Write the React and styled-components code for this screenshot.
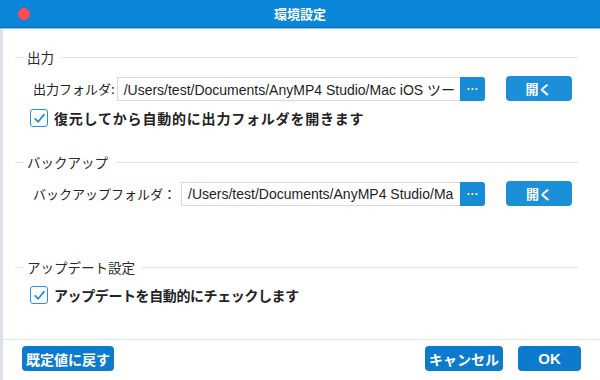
import React from "react";
import styled, { createGlobalStyle } from "styled-components";

const GlobalStyle = createGlobalStyle`
  *, *::before, *::after {
    box-sizing: border-box;
  }
  html, body {
    margin: 0;
    padding: 0;
    background: #ffffff;
  }
  body {
    font-family: "Liberation Sans", "Noto Sans CJK JP", sans-serif;
  }
`;

const jp = `"Noto Sans CJK JP", "Liberation Sans", sans-serif`;

// ウィンドウ全体
const Window = styled.div`
  width: 600px;
  height: 380px;
  display: flex;
  flex-direction: column;
  background: #ffffff;
  overflow: hidden;
`;

const TitleBar = styled.div`
  position: relative;
  height: 28px;
  flex-shrink: 0;
  display: flex;
  align-items: center;
  justify-content: center;
  background: #0a86d8;
  border-bottom: 1px solid #0a6fb6;
  box-shadow: 0 1px 0 #86c8f2;
`;

const CloseDot = styled.span`
  position: absolute;
  left: 18px;
  top: 8px;
  width: 12px;
  height: 12px;
  border-radius: 50%;
  background: #fc4d55;
`;

const Title = styled.div`
  font-family: ${jp};
  font-size: 13px;
  font-weight: 700;
  color: #ffffff;
`;

const Body = styled.div`
  flex: 1;
  display: flex;
  flex-direction: column;
  border-left: 3px solid #dde2e8;
  margin-top: 1px;
  padding: 19px 22px 0 12px;
`;

const Section = styled.div`
  display: flex;
  flex-direction: column;
  margin-top: ${(p) => p.$top || 0}px;
`;

// 見出し + 横線
const SectionHead = styled.div`
  display: flex;
  align-items: center;
  height: 18px;
  font-family: ${jp};
  font-size: 13.5px;
  color: #2a2a2a;

  &::before {
    content: "";
    width: 8px;
    height: 1px;
    background: #e3e3e3;
    margin-right: 4px;
  }
  &::after {
    content: "";
    flex: 1;
    height: 1px;
    background: #e3e3e3;
    margin-left: 7px;
  }
`;

const FieldRow = styled.div`
  display: flex;
  align-items: center;
  height: 25px;
  margin-top: 10px;
  padding-left: 18px;
`;

const Label = styled.span`
  font-family: ${jp};
  font-size: 13px;
  color: #222;
  white-space: nowrap;
  margin-right: ${(p) => p.$gap}px;
`;

const PathBox = styled.div`
  display: flex;
  align-items: stretch;
  height: 24px;
  width: ${(p) => p.$width}px;
`;

const PathText = styled.div`
  flex: 1;
  min-width: 0;
  display: flex;
  align-items: center;
  padding-left: 6px;
  border: 1px solid #dadada;
  border-right: none;
  font-family: "Liberation Sans", "Noto Sans CJK JP", sans-serif;
  font-size: 14px;
  color: #1e1e1e;
  white-space: nowrap;
  overflow: hidden;
`;

const DotsButton = styled.button`
  width: 25px;
  border: none;
  padding: 0;
  display: flex;
  align-items: center;
  justify-content: center;
  background: #168bd8;
  border-radius: 0 3px 3px 0;
`;

const OpenButton = styled.button`
  margin-left: 21px;
  width: 66px;
  height: 25px;
  border: none;
  border-radius: 4px;
  background: #1b8fd8;
  color: #fff;
  font-family: ${jp};
  font-size: 13px;
  font-weight: 700;
`;

const CheckRow = styled.label`
  display: flex;
  align-items: center;
  height: 18px;
  margin-top: ${(p) => p.$top}px;
  padding-left: 15px;
  font-family: ${jp};
  font-size: 14px;
  font-weight: 700;
  letter-spacing: ${(p) => p.$spacing || 0}px;
  color: #222;
  white-space: nowrap;
`;

const Box = styled.span`
  width: 18px;
  height: 18px;
  border: 1.5px solid #2a90dc;
  border-radius: 3px;
  display: flex;
  align-items: center;
  justify-content: center;
  margin-right: 6px;
  background: #fff;
`;

const Footer = styled.div`
  height: 41px;
  flex-shrink: 0;
  display: flex;
  align-items: flex-start;
  padding: 6px 19px 0 19px;
  border-top: 1px solid #e3e3e3;
  border-left: 3px solid #dde2e8;
`;

const Spacer = styled.div`
  flex: 1;
`;

const FootButton = styled.button`
  height: 25px;
  width: ${(p) => p.$width}px;
  margin-left: ${(p) => p.$gap || 0}px;
  border: none;
  border-radius: 4px;
  background: #0c7bcb;
  color: #fff;
  font-family: ${(p) => (p.$latin ? `"Liberation Sans", sans-serif` : jp)};
  font-size: ${(p) => (p.$latin ? 15 : 14)}px;
  font-weight: 700;
  padding: 0;
`;

const Check = () => (
  <svg width="13" height="13" viewBox="0 0 13 13">
    <path d="M2.2 6.8 L5.2 9.8 L11 2.6" fill="none" stroke="#2a90dc" strokeWidth="1.8" strokeLinecap="round" strokeLinejoin="round" />
  </svg>
);

const Dots = () => (
  <svg width="13" height="4" viewBox="0 0 13 4">
    <circle cx="2.5" cy="2" r="1.1" fill="#fff" />
    <circle cx="6.5" cy="2" r="1.1" fill="#fff" />
    <circle cx="10.5" cy="2" r="1.1" fill="#fff" />
  </svg>
);

const App = () => {
  return (
    <Window>
      <GlobalStyle />
      <TitleBar>
        <CloseDot />
        <Title>環境設定</Title>
      </TitleBar>
      <Body>
        <Section>
          <SectionHead>出力</SectionHead>
          <FieldRow>
            <Label $gap={2}>出力フォルダ:</Label>
            <PathBox $width={368}>
              <PathText>/Users/test/Documents/AnyMP4 Studio/Mac iOS ツー</PathText>
              <DotsButton>
                <Dots />
              </DotsButton>
            </PathBox>
            <OpenButton>開く</OpenButton>
          </FieldRow>
          <CheckRow $top={8} $spacing={0.8}>
            <Box>
              <Check />
            </Box>
            復元してから自動的に出力フォルダを開きます
          </CheckRow>
        </Section>
        <Section $top={26}>
          <SectionHead>バックアップ</SectionHead>
          <FieldRow>
            <Label $gap={5}>バックアップフォルダ：</Label>
            <PathBox $width={304}>
              <PathText>/Users/test/Documents/AnyMP4 Studio/Ma</PathText>
              <DotsButton>
                <Dots />
              </DotsButton>
            </PathBox>
            <OpenButton>開く</OpenButton>
          </FieldRow>
        </Section>
        <Section $top={52}>
          <SectionHead>アップデート設定</SectionHead>
          <CheckRow $top={10} $spacing={-0.4}>
            <Box>
              <Check />
            </Box>
            アップデートを自動的にチェックします
          </CheckRow>
        </Section>
      </Body>
      <Footer>
        <FootButton $width={92}>既定値に戻す</FootButton>
        <Spacer />
        <FootButton $width={78}>キャンセル</FootButton>
        <FootButton $width={63} $gap={15} $latin>
          OK
        </FootButton>
      </Footer>
    </Window>
  );
};

export default App;
